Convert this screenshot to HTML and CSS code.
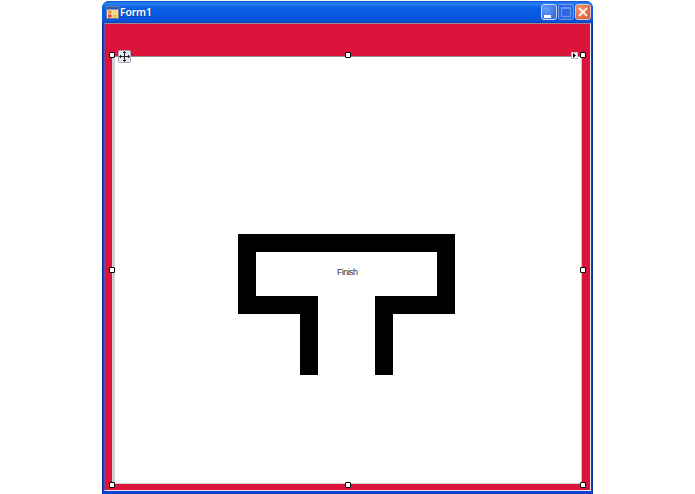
FILE: index.html
```html
<!DOCTYPE html>
<html lang="en">
<head>
<meta charset="utf-8">
<title>Form1</title>
<link rel="stylesheet" href="styles.css">
</head>
<body>
<div class="window">
  <header class="titlebar">
    <svg class="app-icon" width="13" height="13" viewBox="0 0 13 13">
      <rect x="0.5" y="0.5" width="12" height="12" fill="#e8e4d8" stroke="#6a7a9c"/>
      <rect x="1" y="1" width="11" height="2.5" fill="#2b55b8"/>
      <rect x="2" y="4.5" width="3.5" height="3" fill="#e89030"/>
      <rect x="2" y="8.5" width="3.5" height="3" fill="#d8403a"/>
      <rect x="6.5" y="4.5" width="4.5" height="3" fill="#f4d860"/>
      <rect x="6.5" y="8.5" width="4.5" height="3" fill="#f0c040"/>
    </svg>
    <span class="title">Form1</span>
    <div class="controls">
      <div class="btn btn-min"><span class="min-glyph"></span></div>
      <div class="btn btn-max"><span class="max-glyph"></span></div>
      <div class="btn btn-close">
        <svg width="16" height="16" viewBox="0 0 16 16"><path d="M4 4 L12 12 M12 4 L4 12" stroke="#fbeee8" stroke-width="2" fill="none"/></svg>
      </div>
    </div>
  </header>
  <main class="client">
    <div class="panel">
      <svg class="maze" width="217" height="141" viewBox="0 0 217 141">
        <path fill="#000" d="M0 0H217V80H155V141H137V62H199V18H18V62H80V141H62V80H0Z"/>
      </svg>
      <span class="finish">Finish</span>
      <span class="handle h-tl"></span>
      <span class="handle h-tc"></span>
      <span class="handle h-tr"></span>
      <span class="handle h-ml"></span>
      <span class="handle h-mr"></span>
      <span class="handle h-bl"></span>
      <span class="handle h-bc"></span>
      <span class="handle h-br"></span>
      <span class="move-glyph">
        <svg width="13" height="13" viewBox="0 0 13 13">
          <path d="M6.5 1.5V11.5M1.5 6.5H11.5M6.5 1.5L5 3M6.5 1.5L8 3M6.5 11.5L5 10M6.5 11.5L8 10M1.5 6.5L3 5M1.5 6.5L3 8M11.5 6.5L10 5M11.5 6.5L10 8" stroke="#222" fill="none"/>
        </svg>
      </span>
      <span class="smart-tag"><svg width="3" height="5" viewBox="0 0 3 5"><path d="M0 0L3 2.5L0 5Z" fill="#000"/></svg></span>
    </div>
  </main>
</div>
</body>
</html>
```
FILE: styles.css
```css
html, body {
  margin: 0;
  padding: 0;
  background: #fff;
}
body {
  width: 695px;
  height: 494px;
  overflow: hidden;
}
.window {
  box-sizing: border-box;
  display: flex;
  flex-direction: column;
  width: 491px;
  height: 493px;
  margin: 1px 0 0 102px;
  padding: 0 1px 3px;
  background: #0a42d0;
  border-radius: 7px 7px 0 0;
  border-right: 1px solid #0831a8;
  border-left: 1px solid #0831a8;
}
.titlebar {
  display: flex;
  align-items: center;
  flex: none;
  box-sizing: border-box;
  height: 22px;
  margin: 0 -2px;
  padding: 1px 2px 0 4px;
  border-radius: 7px 7px 0 0;
  background: linear-gradient(#0a56dc 0%, #2a84f2 12%, #0a5fe6 30%, #0658e0 70%, #0a54d8 90%, #0741b8 100%);
}
.app-icon {
  flex: none;
}
.title {
  margin-left: 1px;
  font: 600 10.5px/1 "Noto Sans", Arial, sans-serif;
  letter-spacing: -0.2px;
  color: #fff;
  text-shadow: 1px 1px 0 #0a3aa8;
}
.controls {
  display: flex;
  gap: 1px;
  margin: -1px 0 0 auto;
}
.btn {
  box-sizing: border-box;
  display: flex;
  width: 16px;
  height: 16px;
  border: 1px solid #c8d8f8;
  border-radius: 3px;
  background: radial-gradient(circle at 30% 30%, #6a9cf6, #2c5edc);
}
.btn-max {
  background: #2f68e4;
  border-color: #6c96ec;
}
.btn-close {
  background: radial-gradient(circle at 30% 30%, #ee9672, #d8502a);
  border-color: #e8c8b8;
  align-items: center;
  justify-content: center;
}
.btn-close svg {
  flex: none;
  margin: -1px;
}
.min-glyph {
  width: 7px;
  height: 3px;
  background: #fff;
  margin: auto 0 1px 2px;
}
.max-glyph {
  box-sizing: border-box;
  width: 10px;
  height: 10px;
  margin: auto;
  border: 1px solid #6c96ec;
  border-top-width: 2px;
}
.client {
  flex: 1;
  display: flex;
  box-sizing: border-box;
  min-height: 0;
  padding: 32px 8px 6px 7px;
  background: #dc143c;
  border-left: 1px solid #7048a0;
  border-right: 1px solid #e8e8e8;
  border-bottom: 1px solid #e8e8e8;
  border-top: 1px solid #a08890;
}
.panel {
  position: relative;
  flex: 1;
  background: #fff;
  border-style: solid;
  border-width: 1px 1px 1px 3px;
  border-color: #909090 #c8c4c4 #d0d0d0 #d4d0d0;
}
.maze {
  position: absolute;
  left: 123px;
  top: 177px;
}
.finish {
  position: absolute;
  left: 222px;
  top: 210px;
  font: 400 9px/11px "Liberation Sans", Arial, sans-serif;
  letter-spacing: -0.6px;
  color: #333;
  opacity: 0.99;
}
.handle {
  position: absolute;
  box-sizing: border-box;
  width: 6px;
  height: 6px;
  background: #fff;
  border: 1px solid #000;
  border-radius: 1px;
}
.h-tl { left: -6px; top: -5px; }
.h-tc { left: 230px; top: -5px; }
.h-tr { right: -5px; top: -5px; }
.h-ml { left: -6px; top: 210px; }
.h-mr { right: -5px; top: 210px; }
.h-bl { left: -6px; bottom: -5px; }
.h-bc { left: 230px; bottom: -5px; }
.h-br { right: -5px; bottom: -5px; }
.move-glyph {
  position: absolute;
  left: 3px;
  top: -7px;
  display: flex;
  box-sizing: border-box;
  width: 13px;
  height: 13px;
  background: #e4e8f0;
  border: 1px solid #a8a8b8;
  border-radius: 2px;
}
.move-glyph svg {
  flex: none;
  margin: -1px;
}
.smart-tag {
  position: absolute;
  right: 3px;
  top: -5px;
  display: flex;
  align-items: center;
  justify-content: center;
  box-sizing: border-box;
  width: 7px;
  height: 7px;
  background: #fff;
  border: 1px solid #c0c0c0;
}
```
